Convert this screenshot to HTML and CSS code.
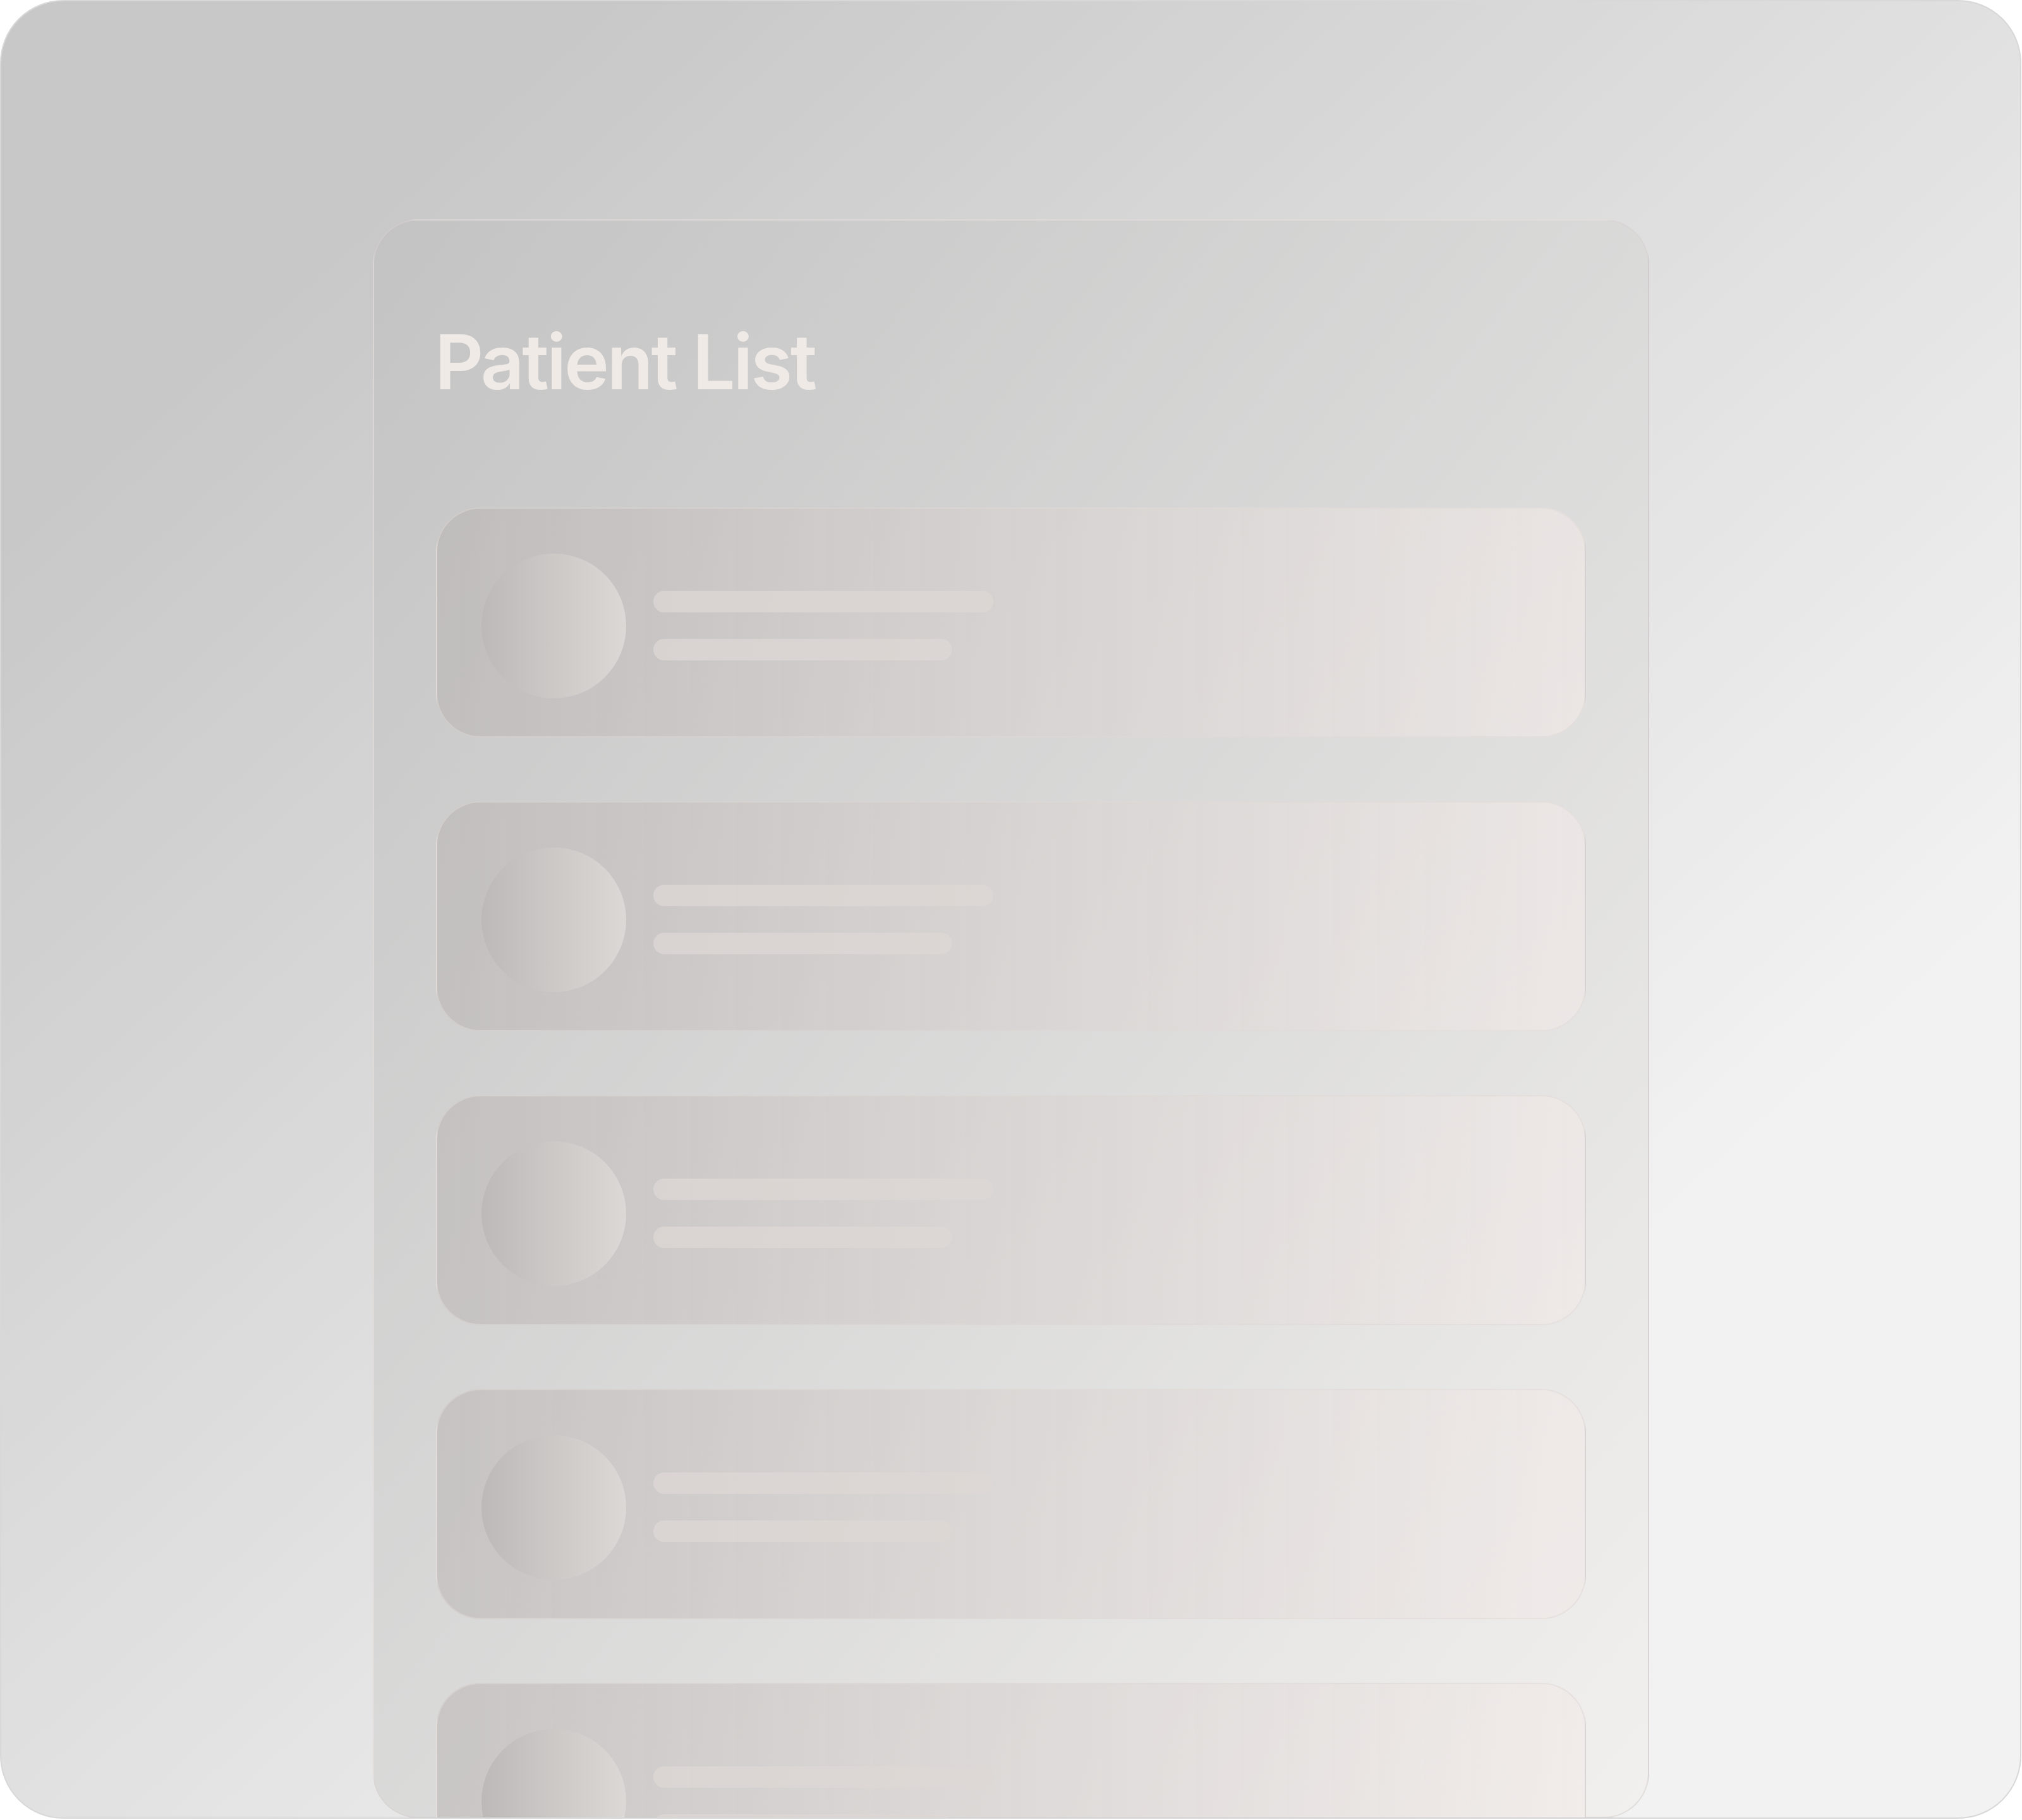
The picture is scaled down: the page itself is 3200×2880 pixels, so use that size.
FILE: index.html
```html
<!DOCTYPE html>
<html lang="en">

<head>
	<meta charset="UTF-8">
	<meta name="viewport" content="width=device-width, initial-scale=1.0">
	<title>Patient List</title>
	<link rel="stylesheet" href="styles.css">
</head>

<body>

	<div class="screen">
		<section class="panel">
			<h1 class="panel-title">Patient List</h1>

			<ul class="patient-list">
				<li class="patient-card">
					<div class="avatar"></div>
					<div class="patient-info">
						<span class="skeleton-line line-name"></span>
						<span class="skeleton-line line-meta"></span>
					</div>
				</li>
				<li class="patient-card">
					<div class="avatar"></div>
					<div class="patient-info">
						<span class="skeleton-line line-name"></span>
						<span class="skeleton-line line-meta"></span>
					</div>
				</li>
				<li class="patient-card">
					<div class="avatar"></div>
					<div class="patient-info">
						<span class="skeleton-line line-name"></span>
						<span class="skeleton-line line-meta"></span>
					</div>
				</li>
				<li class="patient-card">
					<div class="avatar"></div>
					<div class="patient-info">
						<span class="skeleton-line line-name"></span>
						<span class="skeleton-line line-meta"></span>
					</div>
				</li>
				<li class="patient-card">
					<div class="avatar"></div>
					<div class="patient-info">
						<span class="skeleton-line line-name"></span>
						<span class="skeleton-line line-meta"></span>
					</div>
				</li>
			</ul>
		</section>
	</div>

</body>

</html>
```

FILE: styles.css
```css
body {
	margin: 0;
	background-color: #ffffff;
	font-family: Inter, "Noto Sans", "Liberation Sans", sans-serif;
}

.screen {
	box-sizing: border-box;
	width: 3199px;
	height: 2878px;
	padding: 345px 0 0 588px;
	border: 2px solid #d8d8d8;
	border-radius: 100px;
	overflow: hidden;
	background: linear-gradient(to bottom right, #c8c8c8 15%, #f2f2f2 75%);
}

/* --- Glass panel --- */
.panel {
	box-sizing: border-box;
	width: 2020px;
	height: 2530px;
	padding: 164px 98px 0 98px;
	border: 2px solid rgba(215, 210, 208, 0.6);
	border-radius: 72px;
	background: linear-gradient(to bottom right, #c3c3c3, #f1f0ef);
}

.panel-title {
	margin: 0 0 170px -2px;
	font-size: 120px;
	line-height: 1;
	font-weight: 600;
	letter-spacing: -3.5px;
	color: #f0eae7;
}

.patient-list {
	list-style: none;
	margin: 0;
	padding: 0;
	display: flex;
	flex-direction: column;
	gap: 101px;
}

/* --- Card skeleton --- */
.patient-card {
	box-sizing: border-box;
	flex-shrink: 0;
	display: flex;
	align-items: center;
	height: 364px;
	padding: 10px 70px 0 70px;
	border: 2px solid rgba(222, 216, 214, 0.55);
	border-radius: 70px;
	background: linear-gradient(to right, rgba(182, 178, 176, 0.5), rgba(242, 234, 231, 0.6));
}

.avatar {
	flex-shrink: 0;
	width: 229px;
	height: 229px;
	border-radius: 50%;
	background: linear-gradient(to right, #bcb9b8, #dcd8d5);
}

.patient-info {
	display: flex;
	flex-direction: column;
	gap: 42px;
	margin-left: 43px;
}

.skeleton-line {
	display: block;
	height: 34px;
	border-radius: 17px;
	background-color: rgba(222, 215, 212, 0.75);
}

.line-name {
	width: 538px;
}

.line-meta {
	width: 473px;
}
```
